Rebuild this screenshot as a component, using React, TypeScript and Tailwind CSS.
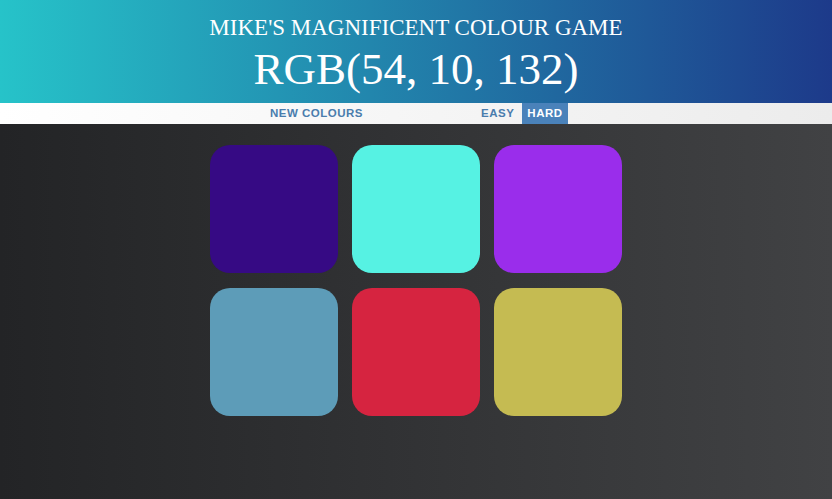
export default function App() {
  const colors = ["#360a84", "#56f2e3", "#9a2deb", "#5d9cb8", "#d62440", "#c5bb52"];
  return (
    <div className="w-[832px] h-[499px] flex flex-col overflow-hidden">
      <header className="h-[103px] bg-[linear-gradient(to_right,#26c3c9,#1d3a8a)] flex flex-col items-center text-white" style={{ fontFamily: '"Liberation Serif", serif' }}>
        <h1 className="mt-[14px] text-[23px] leading-[28px] uppercase">Mike's Magnificent Colour Game</h1>
        <div className="mt-[1px] text-[45px] leading-[52px]">RGB(54, 10, 132)</div>
      </header>
      <nav className="h-[21px] bg-[linear-gradient(to_right,#ffffff,#ececec)] flex items-stretch" style={{ fontFamily: '"Liberation Sans", sans-serif' }}>
        <div className="w-[412px] mx-auto flex items-stretch text-[11.5px] tracking-[0.5px] font-bold text-[#4a7dad]">
          <button className="ml-[60px] flex items-center">NEW COLOURS</button>
          <button className="ml-[118px] flex items-center">EASY</button>
          <button className="ml-[8px] px-[5px] flex items-center bg-[#4a82ba] text-white">HARD</button>
        </div>
      </nav>
      <main className="flex-1 bg-[linear-gradient(to_right,#232426,#414244)] flex justify-center">
        <div className="mt-[21px] grid grid-cols-[128px_128px_128px] gap-x-[14px] gap-y-[15px] h-fit">
          {colors.map((c) => (
            <div key={c} className="w-[128px] h-[128px] rounded-[20px]" style={{ backgroundColor: c }} />
          ))}
        </div>
      </main>
    </div>
  );
}
